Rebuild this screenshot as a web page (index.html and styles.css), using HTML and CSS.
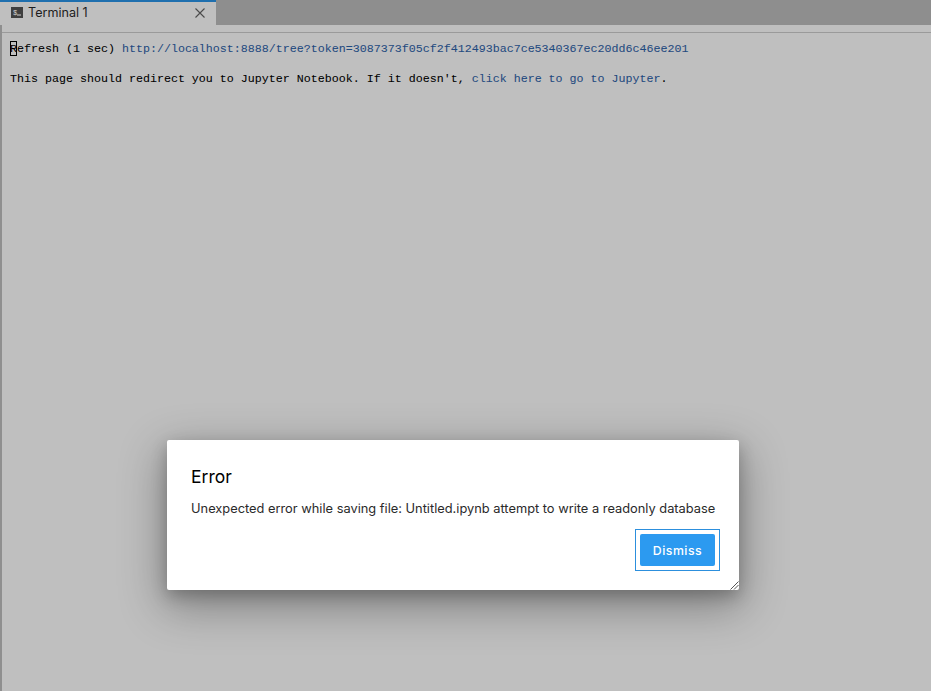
FILE: index.html
```html
<!DOCTYPE html>
<html lang="en">
<head>
<meta charset="utf-8">
<title>Terminal 1</title>
<link rel="stylesheet" href="styles.css">
</head>
<body>
<div class="app">
  <div class="tabbar">
    <div class="tab">
      <svg class="tab-icon" width="12" height="11" viewBox="0 0 12 11"><rect width="12" height="11" fill="#3f3f3f"/><text x="2" y="7.5" class="tab-icon-text">$</text><rect x="6" y="7.5" width="4" height="1" fill="#cfcfcf"/></svg>
      <span class="tab-label">Terminal 1</span>
      <svg class="tab-close" width="10" height="10" viewBox="0 0 10 10"><path d="M0.5 0.5L9.5 9.5M9.5 0.5L0.5 9.5" stroke="#4a4a4a" stroke-width="1.1" fill="none"/></svg>
    </div>
  </div>
  <div class="tab-gap"></div>
  <div class="terminal">
    <div class="line"><span class="cursor"></span>Refresh (1 sec) <a class="link">http://localhost:8888/tree?token=3087373f05cf2f412493bac7ce5340367ec20dd6c46ee201</a></div>
    <div class="line">&nbsp;</div>
    <div class="line">This page should redirect you to Jupyter Notebook. If it doesn't, <a class="link">click here to go to Jupyter</a>.</div>
  </div>
</div>
<div class="dialog">
  <h1 class="dialog-title">Error</h1>
  <p class="dialog-body">Unexpected error while saving file: Untitled.ipynb attempt to write a readonly database</p>
  <div class="dialog-actions">
    <div class="focus-ring"><button class="dismiss">Dismiss</button></div>
  </div>
  <svg class="grip" width="9" height="9" viewBox="0 0 9 9"><path d="M0.5 8.5L8.5 0.5M4 8.5L8.5 4" stroke="#555" stroke-width="1" fill="none"/></svg>
</div>
</body>
</html>
```
FILE: styles.css
```css
* { box-sizing: border-box; }
html, body { margin: 0; height: 100%; overflow: hidden; }
body { background: #bfbfbf; font-family: Inter, "Liberation Sans", sans-serif; position: relative; }
.app { height: 691px; display: flex; flex-direction: column; border-left: 2px solid #8f8f8f; }
.tabbar { height: 25px; background: #8e8e8e; display: flex; margin-left: -2px; flex: none; }
.tab { width: 216px; height: 25px; background: #bfbfbf; border-top: 2px solid #1f6fae; display: flex; align-items: center; padding: 0 11px 2px; color: #1d1d1d; font-size: 12.6px; }
.tab-icon { flex: none; }
.tab-icon-text { font-family: "Liberation Mono", monospace; font-size: 7px; fill: #cfcfcf; }
.tab-label { margin-left: 5px; flex: 1; }
.tab-close { flex: none; }
.tab-gap { height: 8px; flex: none; border-bottom: 1px solid #9a9a9a; }
.terminal { flex: 1; padding: 9px 0 0 8px; font-family: "Liberation Mono", monospace; font-size: 11.67px; line-height: 15px; color: #000; position: relative; -webkit-text-stroke: 0.06px #000; }
.line { height: 15px; white-space: pre; }
.link { color: #1f4a80; -webkit-text-stroke: 0.06px #1f4a80; }
.cursor { position: absolute; left: 8px; top: 8px; width: 7px; height: 15px; border: 1px solid #000; }
.dialog { position: absolute; left: 167px; top: 440px; width: 572px; height: 150px; background: #fff; border-radius: 2px; padding: 28px 24px 0; box-shadow: 0 14px 45px 4px rgba(0,0,0,0.32), 0 6px 16px rgba(0,0,0,0.22); }
.dialog-title { margin: 0; font-size: 17.5px; font-weight: 400; line-height: 18px; color: #000; }
.dialog-body { margin: 15px 0 0; font-size: 12.84px; line-height: 16px; color: #2a2a2a; white-space: nowrap; }
.dialog-actions { display: flex; justify-content: flex-end; margin-top: 12px; margin-right: -5px; }
.focus-ring { border: 1px solid #2c8fdd; padding: 4px; }
.dismiss { display: block; width: 75px; height: 32px; background: #2c9af0; border: none; border-radius: 2px; color: #fff; font: 500 12.3px Inter, sans-serif; letter-spacing: 0.5px; padding: 0; }
.grip { position: absolute; right: 0; bottom: 0; }
```
